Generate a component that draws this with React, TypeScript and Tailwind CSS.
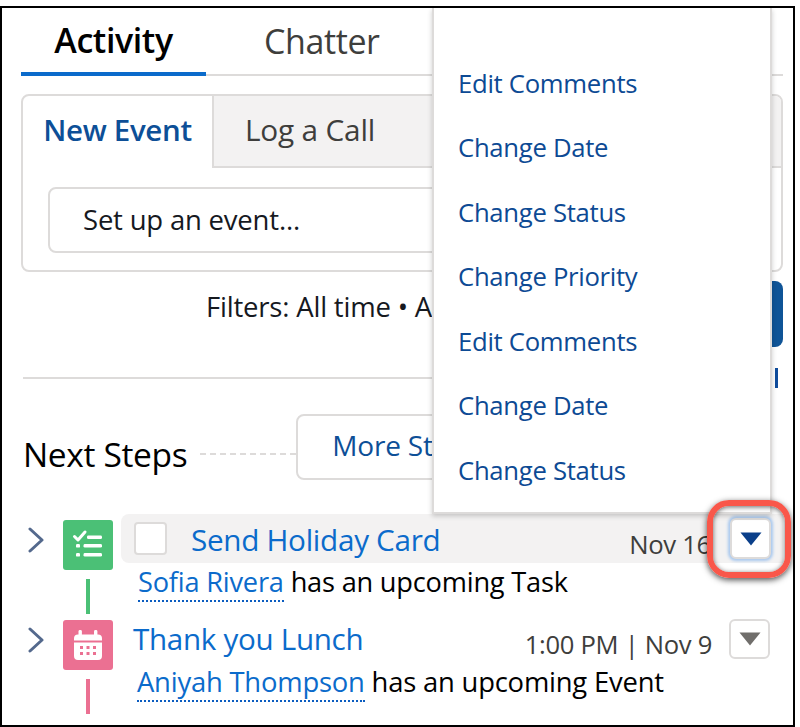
import React from 'react';

const menuItems = [
  'Edit Comments',
  'Change Date',
  'Change Status',
  'Change Priority',
  'Edit Comments',
  'Change Date',
  'Change Status',
];

const Chevron = () => (
  <svg viewBox="0 0 16 26" className="w-[16px] h-[26px]" fill="none">
    <path d="M2 2l12 11L2 24" stroke="#54698d" strokeWidth="3" strokeLinecap="round" strokeLinejoin="round" />
  </svg>
);

const ChecklistIcon = () => (
  <svg viewBox="0 0 50 50" className="w-[50px] h-[50px]" fill="none">
    <path d="M11.5 16.5l3.5 3.5 7-8" stroke="#fff" strokeWidth="3" strokeLinecap="round" strokeLinejoin="round" />
    <rect x="24" y="15.5" width="15" height="3.6" rx="1.4" fill="#fff" />
    <rect x="13" y="24" width="4" height="3.6" rx="1.2" fill="#fff" />
    <rect x="20.5" y="24" width="18.5" height="3.6" rx="1.4" fill="#fff" />
    <rect x="13" y="33" width="4" height="3.6" rx="1.2" fill="#fff" />
    <rect x="20.5" y="33" width="18.5" height="3.6" rx="1.4" fill="#fff" />
  </svg>
);

const CalendarIcon = () => (
  <svg viewBox="0 0 50 50" className="w-[50px] h-[50px]" fill="none">
    <rect x="15.5" y="10" width="3.4" height="7" rx="1.4" fill="#fff" />
    <rect x="31" y="10" width="3.4" height="7" rx="1.4" fill="#fff" />
    <path d="M11 18.5a4 4 0 0 1 4-4h20a4 4 0 0 1 4 4v2H11z" fill="#fff" />
    <path
      fillRule="evenodd"
      clipRule="evenodd"
      d="M11 22.5h28V36a4 4 0 0 1-4 4H15a4 4 0 0 1-4-4zM17 26h3v3h-3zM23.5 26h3v3h-3zM30 26h3v3h-3zM17 32h3v3h-3zM23.5 32h3v3h-3zM30 32h3v3h-3z"
      fill="#fff"
    />
  </svg>
);

const Triangle = ({ color }: { color: string }) => (
  <svg viewBox="0 0 22 14" className="w-[22px] h-[14px]">
    <path d="M0.5 0.5h21L11 13.5z" fill={color} />
  </svg>
);

export default function App() {
  return (
    <div className="w-[800px] h-[727px] bg-white pt-[6px] overflow-hidden" style={{ fontFamily: '"Open Sans", "Noto Sans", sans-serif' }}>
      <div className="relative w-[795px] h-[721px] border-2 border-black overflow-hidden text-[#16191f]">
        {/* tabs */}
        <div className="mx-[19px] w-[762px] h-[68px] border-b-2 border-[#dddbda] flex">
          <div className="w-[185px] h-[68px] border-b-4 border-[#0b6bcb] flex justify-center items-center text-[34px] font-semibold text-black tracking-[-0.4px]">
            Activity
          </div>
          <div className="ml-[58px] flex items-center text-[34px] text-[#3e3e3c] tracking-[-0.4px]">Chatter</div>
        </div>

        {/* composer */}
        <div className="ml-[19px] mt-[18px] w-[762px] h-[178px] border-2 border-[#dddbda] rounded-[8px] overflow-hidden">
          <div className="flex h-[72px]">
            <div className="w-[189px] flex items-center justify-center pb-[4px] text-[29.5px] font-semibold text-[#0d4f97] tracking-[-0.3px]">New Event</div>
            <div className="flex-1 bg-[#f3f2f2] border-l-2 border-b-2 border-[#dddbda] pl-[31px] pb-[2px] flex items-center text-[29.8px] text-[#3e3e3c] tracking-[-0.2px]">
              Log a Call
            </div>
          </div>
          <div className="ml-[25px] mt-[19px] w-[709px] h-[66px] border-2 border-[#dddbda] rounded-[8px] pl-[33px] flex items-center text-[27.5px] tracking-[-0.2px]">
            Set up an event...
          </div>
        </div>

        {/* filters */}
        <div className="flex h-[96px]">
          <div className="ml-[204px] mt-[18px] w-[227px] h-[34px] overflow-hidden text-[27.5px] leading-[34px] tracking-[-0.2px] whitespace-nowrap">Filters: All time • All activities</div>
          <div className="ml-auto mr-[10px] mt-[9px] w-[60px] h-[66px] bg-[#0f5497] rounded-r-[8px]" />
        </div>
        <div className="flex items-center">
          <div className="ml-[21px] w-[730px] h-[2px] bg-[#dddbda]" />
          <div className="ml-[22px] w-[3px] h-[20px] bg-[#0f4c9c]" />
        </div>

        {/* next steps */}
        <div className="mt-[26px] ml-[21px] flex items-center h-[66px] w-[760px]">
          <span className="mt-[14px] text-[33.5px] tracking-[-0.35px] text-black whitespace-nowrap">Next Steps</span>
          <div className="mt-[14px] flex-none w-[96px] ml-[13px] border-t-2 border-dashed border-[#dddbda]" />
          <div className="w-[300px] h-[66px] border-2 border-[#dddbda] rounded-[8px] pl-[34px] pb-[4px] flex items-center text-[28px] text-[#0d4f97] tracking-[-0.2px]">
            <span className="w-[100px] overflow-hidden whitespace-nowrap">More Steps</span>
          </div>
        </div>

        {/* timeline */}
        <div className="mt-[40px] ml-[21px] w-[760px]">
          <div className="flex">
            <div className="w-[40px] pt-[7px] pl-[5px]">
              <Chevron />
            </div>
            <div className="flex flex-col items-center w-[50px]">
              <div className="w-[50px] h-[50px] bg-[#4bc076] rounded-[3px]">
                <ChecklistIcon />
              </div>
              <div className="mt-[9px] w-[4px] h-[35px] bg-[#4bc076]" />
            </div>
            <div className="flex-1 ml-[8px] -mt-[6px]">
              <div className="h-[49px] bg-[#f3f2f2] rounded-l-[8px] flex items-center pl-[13px] pr-[12px]">
                <div className="w-[33px] h-[33px] bg-white border-2 border-[#dddbda] rounded-[4px]" />
                <span className="ml-[24px] mt-[4px] text-[29.7px] tracking-[-0.3px] text-[#0b6bcb] whitespace-nowrap">Send Holiday Card</span>
                <span className="ml-auto mr-[19px] mt-[14px] text-[25.7px] tracking-[-0.3px] text-[#3e3e3c]">Nov 16</span>
                <div className="w-[41px] h-[41px] bg-white border-2 border-[#dddbda] rounded-[6px] flex items-center justify-center shadow-[0_0_3px_2px_#a8c8ee]">
                  <Triangle color="#0a3f8a" />
                </div>
              </div>
              <div className="pl-[17px] mt-[1px] text-[27.2px] leading-[36px] tracking-[-0.2px] text-black whitespace-nowrap">
                <span className="text-[#0b6bcb] border-b-2 border-dotted border-[#0b5cc0]">Sofia Rivera</span> has an upcoming Task
              </div>
            </div>
          </div>

          <div className="flex mt-[6px]">
            <div className="w-[40px] pt-[7px] pl-[5px]">
              <Chevron />
            </div>
            <div className="flex flex-col items-center w-[50px]">
              <div className="w-[50px] h-[50px] bg-[#eb7092] rounded-[3px]">
                <CalendarIcon />
              </div>
              <div className="mt-[9px] w-[4px] h-[35px] bg-[#eb7092]" />
            </div>
            <div className="flex-1 ml-[20px] -mt-[3px]">
              <div className="flex items-start h-[47px]">
                <span className="text-[29.6px] tracking-[-0.3px] text-[#0b6bcb] whitespace-nowrap">Thank you Lunch</span>
                <span className="ml-auto mr-[17px] mt-[9px] text-[25.6px] tracking-[-0.3px] text-[#3e3e3c]">1:00 PM | Nov 9</span>
                <div className="mr-[13px] mt-[2px] w-[41px] h-[40px] bg-white border-2 border-[#dddbda] rounded-[6px] flex items-center justify-center">
                  <Triangle color="#706e6b" />
                </div>
              </div>
              <div className="pl-[4px] text-[27.4px] leading-[36px] tracking-[-0.2px] text-black whitespace-nowrap">
                <span className="text-[#0b6bcb] border-b-2 border-dotted border-[#0b5cc0]">Aniyah Thompson</span> has an upcoming Event
              </div>
            </div>
          </div>
        </div>

        {/* dropdown menu over the page */}
        <div className="absolute left-[430px] top-0 w-[340px] h-[506px] bg-white border-x-2 border-b-2 border-[#dddbda] shadow-[0_2px_5px_rgba(0,0,0,0.2)] pt-[44px] pl-[24px]">
          {menuItems.map((item, i) => (
            <div key={i} className="h-[64.5px] flex items-center text-[25.7px] text-[#0d4a94] tracking-[-0.3px]">
              {item}
            </div>
          ))}
        </div>

        {/* red callout */}
        <div className="absolute left-[705px] top-[492px] w-[84px] h-[78px] border-[6px] border-[#f9574a] rounded-[22px] shadow-[0_2px_6px_rgba(0,0,0,0.7),inset_0_1px_5px_rgba(0,0,0,0.6)]" />
      </div>
    </div>
  );
}
